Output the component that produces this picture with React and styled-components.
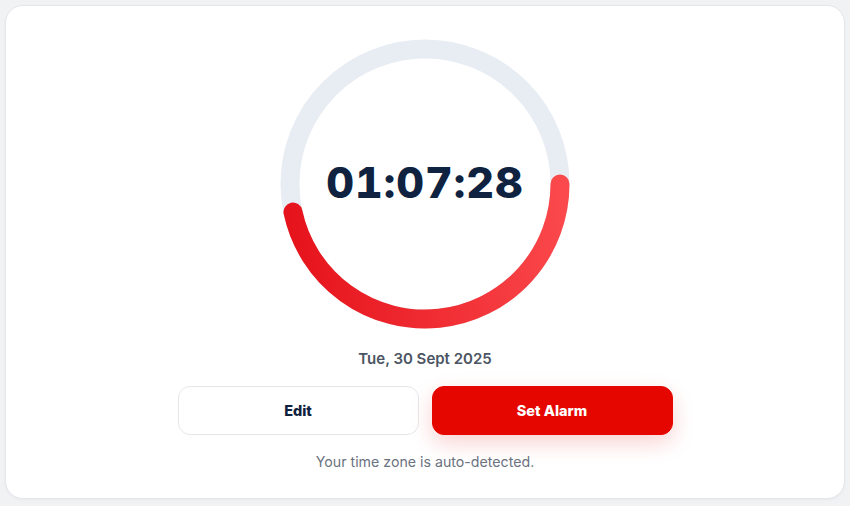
import React from 'react';
import styled, { createGlobalStyle } from 'styled-components';

const GlobalStyle = createGlobalStyle`
    body {
        margin: 0;
        background: #f1f2f4;
        font-family: 'Inter', 'Liberation Sans', sans-serif;
    }
`

const Card = styled.div`
    margin: 5px;
    height: 494px;
    box-sizing: border-box;
    background: #ffffff;
    border: 1px solid #e5e7eb;
    border-radius: 18px;
    box-shadow: 0 1px 3px rgba(15, 23, 42, 0.04);
    display: flex;
    flex-direction: column;
    align-items: center;
    padding-top: 33px;
`

const Dial = styled.div`
    display: grid;
    width: 290px;
    height: 290px;
    & > * {
        grid-area: 1 / 1;
    }
`

const Time = styled.div`
    align-self: center;
    justify-self: center;
    margin-bottom: 4px;
    font-size: 43px;
    font-weight: 800;
    letter-spacing: 1px;
    color: #0f2340;
    font-variant-numeric: tabular-nums;
`

const DateLabel = styled.div`
    margin-top: 20px;
    font-size: 15px;
    line-height: 20px;
    font-weight: 600;
    color: #4b5563;
`

const Actions = styled.div`
    margin-top: 17px;
    display: flex;
    gap: 13px;
`

const Button = styled.button`
    width: 241px;
    height: 49px;
    border-radius: 12px;
    font-family: inherit;
    font-size: 14.5px;
    font-weight: 800;
    cursor: pointer;
    border: 1px solid ${p => p.primary ? '#e50600' : '#e5e7eb'};
    background: ${p => p.primary ? '#e50600' : '#ffffff'};
    color: ${p => p.primary ? '#ffffff' : '#0f2340'};
    box-shadow: ${p => p.primary ? '0 8px 22px rgba(229, 6, 0, 0.18)' : 'none'};
`

const Note = styled.div`
    margin-top: 17px;
    font-size: 14.2px;
    line-height: 20px;
    color: #6b7280;
`

const R = 135;
const C = 145;
const endAngle = 168 * Math.PI / 180;
const ex = C + R * Math.cos(endAngle);
const ey = C + R * Math.sin(endAngle);

const Ring = () => (
    <svg width="290" height="290" viewBox="0 0 290 290">
        <defs>
            <linearGradient id="arc" gradientUnits="userSpaceOnUse" x1="0" y1="200" x2="290" y2="160">
                <stop offset="0" stopColor="#e5111a" />
                <stop offset="1" stopColor="#fb4a4d" />
            </linearGradient>
        </defs>
        <circle cx={C} cy={C} r={R} fill="none" stroke="#e8edf3" strokeWidth="19" />
        <path
            d={`M ${C + R} ${C} A ${R} ${R} 0 0 1 ${ex} ${ey}`}
            fill="none"
            stroke="url(#arc)"
            strokeWidth="19"
            strokeLinecap="round"
        />
    </svg>
)

const App = () => {
    return (
        <>
            <GlobalStyle />
            <Card>
                <Dial>
                    <Ring />
                    <Time>01:07:28</Time>
                </Dial>
                <DateLabel>Tue, 30 Sept 2025</DateLabel>
                <Actions>
                    <Button>Edit</Button>
                    <Button primary>Set Alarm</Button>
                </Actions>
                <Note>Your time zone is auto-detected.</Note>
            </Card>
        </>
    )
}

export default App;
